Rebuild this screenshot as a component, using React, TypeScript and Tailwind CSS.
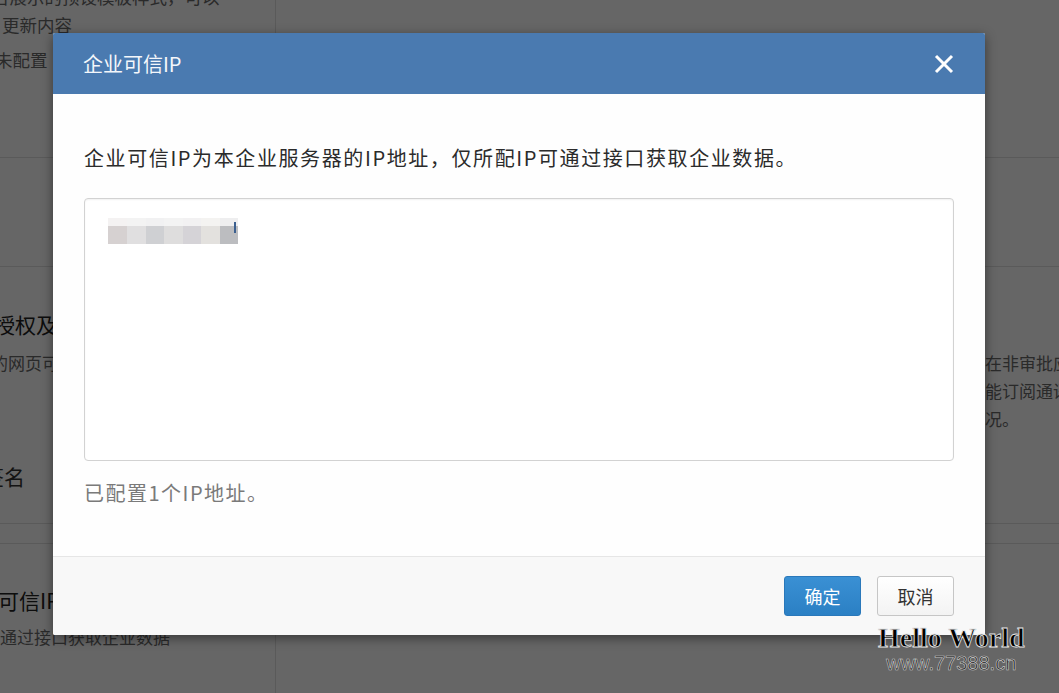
import React from "react";

const mosaicTop = ["#f4f2f2", "#f3f3f3", "#f1f1f2", "#f3f3f3", "#f2f1f2", "#f4f3f1", "#eeeeef"];
const mosaicBottom = ["#d6d1d1", "#e0dfe0", "#cfd0d3", "#dedddd", "#d5d3d7", "#e3e1de", "#bcbdc0"];
const widths = [19, 19, 18, 19, 18, 19, 18];

function CloseIcon() {
  return (
    <svg width="20" height="20" viewBox="0 0 20 20" fill="none">
      <path d="M2 2 L18 18 M18 2 L2 18" stroke="white" strokeWidth="3" strokeLinecap="butt" />
    </svg>
  );
}

export default function App() {
  return (
    <div className="relative h-[693px] w-full overflow-hidden bg-white font-['Noto_Sans_CJK_SC',sans-serif]">
      {/* background page */}
      <div className="flex h-full flex-col">
        {/* Row A */}
        <div className="flex h-[158px] shrink-0 border-b border-[#e2e2e2]">
          <div className="w-[276px] shrink-0 overflow-hidden border-r border-[#e2e2e2]">
            <div className="-ml-[8px] -mt-[16px] whitespace-nowrap text-[17.5px] leading-[25px] text-[#6a6a6a]">台展示的预设模板样式，可以</div>
            <div className="ml-[2px] mt-[3px] whitespace-nowrap text-[17.5px] leading-[25px] text-[#6a6a6a]">更新内容</div>
            <div className="-ml-[5px] mt-[10px] whitespace-nowrap text-[17.5px] leading-[25px] text-[#6a6a6a]">未配置</div>
          </div>
          <div className="flex-1" />
        </div>
        {/* Row B */}
        <div className="flex h-[109px] shrink-0 border-b border-[#e2e2e2]">
          <div className="w-[276px] shrink-0 border-r border-[#e2e2e2]" />
          <div className="flex-1" />
        </div>
        {/* Row C */}
        <div className="flex h-[257px] shrink-0 border-b border-[#e2e2e2]">
          <div className="w-[276px] shrink-0 overflow-hidden border-r border-[#e2e2e2]">
            <div className="-ml-[6px] mt-[42px] whitespace-nowrap text-[21px] leading-[30px] text-[#222]">授权及JS-SDK</div>
            <div className="-ml-[9px] mt-[10px] whitespace-nowrap text-[17px] leading-[28px] text-[#6a6a6a]">的网页可以使用</div>
            <div className="-ml-[17px] mt-[84px] whitespace-nowrap text-[21px] leading-[30px] text-[#333]">签名</div>
          </div>
          <div className="flex-1 overflow-hidden pl-[709px] pt-[82px]">
            <div className="whitespace-nowrap text-[17px] leading-[28px] text-[#6a6a6a]">
              <div>在非审批应用</div>
              <div>能订阅通讯录</div>
              <div>况。</div>
            </div>
          </div>
        </div>
        {/* Gap */}
        <div className="flex h-[20px] shrink-0 border-b border-[#e2e2e2]">
          <div className="w-[276px] shrink-0" />
        </div>
        {/* Row D */}
        <div className="flex flex-1">
          <div className="w-[276px] shrink-0 overflow-hidden border-r border-[#e2e2e2]">
            <div className="-ml-[2px] mt-[41px] whitespace-nowrap text-[21px] leading-[30px] text-[#222]">可信IP</div>
            <div className="-ml-[17px] mt-[8px] whitespace-nowrap text-[17px] leading-[28px] text-[#6a6a6a]">可通过接口获取企业数据</div>
          </div>
          <div className="flex-1" />
        </div>
      </div>

      {/* overlay */}
      <div className="absolute inset-0 bg-black/60" />

      {/* modal */}
      <div className="absolute left-[53px] top-[33px] w-[932px] overflow-hidden rounded-[2px] bg-white shadow-[0_3px_12px_rgba(0,0,0,0.45)]">
        <div className="flex h-[61px] items-center justify-between bg-[#4a7ab0] pl-[30px] pr-[31px]">
          <div className="text-[20px] leading-[28px] text-[#f4f7fb]">企业可信IP</div>
          <CloseIcon />
        </div>
        <div className="bg-[#fefefe] px-[31px] pb-[49px] pt-[50px]">
          <div className="text-[20px] leading-[28px] tracking-[1.6px] text-[#2b2b2b]">企业可信IP为本企业服务器的IP地址，仅所配IP可通过接口获取企业数据。</div>
          <div className="mt-[26px] h-[263px] rounded-[4px] border border-[#d2d2d2] bg-white pl-[23px] pt-[19px] shadow-[inset_0_1px_2px_rgba(0,0,0,0.06)]">
            <div className="relative flex w-fit flex-col">
              <div className="flex h-[8px]">
                {mosaicTop.map((c, i) => (
                  <div key={i} className="h-full" style={{ width: widths[i], background: c }} />
                ))}
              </div>
              <div className="flex h-[18px]">
                {mosaicBottom.map((c, i) => (
                  <div key={i} className="h-full" style={{ width: widths[i], background: c }} />
                ))}
              </div>
              <div className="absolute right-[2px] top-[4px] h-[11px] w-[2px] bg-[#3b5f8f]" />
            </div>
          </div>
          <div className="mt-[18px] text-[20px] leading-[28px] tracking-[1.5px] text-[#7a7a7a]">已配置1个IP地址。</div>
        </div>
        <div className="flex h-[79px] items-center justify-end gap-[16px] border-t border-[#e6e6e6] bg-[#f8f8f8] pr-[31px]">
          <button className="h-[40px] w-[77px] rounded-[3px] border border-[#2a78ba] bg-gradient-to-b from-[#3a90d4] to-[#2b80c4] text-[18px] text-white">确定</button>
          <button className="h-[40px] w-[77px] rounded-[3px] border border-[#c6c6c6] bg-gradient-to-b from-white to-[#f3f3f3] text-[18px] text-[#333]">取消</button>
        </div>
      </div>

      {/* watermark */}
      <div className="absolute left-[878px] top-[622px] flex flex-col items-center">
        <div className="font-['Liberation_Serif',serif] text-[28px] font-bold leading-[32px] text-black [-webkit-text-stroke:0.8px_#e8e8e8]">Hello World</div>
        <div className="mt-[0px] font-['Liberation_Sans',sans-serif] text-[20px] leading-[18px] text-[#222] [-webkit-text-stroke:0.6px_#cfcfcf]">www.77388.cn</div>
      </div>
    </div>
  );
}
